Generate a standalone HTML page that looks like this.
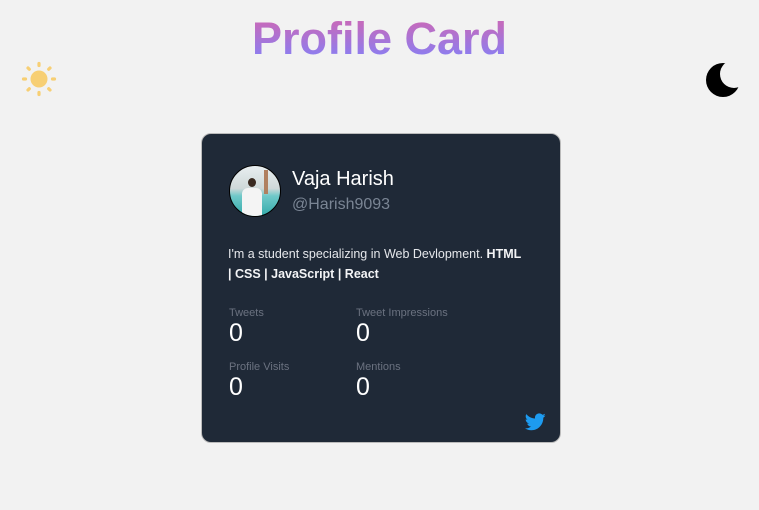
<!DOCTYPE html>
<html><head><meta charset="utf-8"><style>
*{margin:0;padding:0;box-sizing:border-box}
body{width:759px;height:510px;background:#f2f2f2;font-family:"Liberation Sans",sans-serif;position:relative;overflow:hidden}
h1{position:absolute;left:0;width:759px;top:12px;text-align:center;font-size:45px;font-weight:bold;background:linear-gradient(#c46bbd 20%,#8a7ef2 85%);-webkit-background-clip:text;background-clip:text;color:transparent;line-height:54px}
.card{position:absolute;left:201px;top:133px;width:360px;height:310px;background:#1f2937;border:1px solid #bbb;border-radius:10px;color:#fff}
.av{position:absolute;left:27px;top:31px;width:52px;height:52px;border-radius:50%;border:1px solid #000;background:linear-gradient(#e8eef0 0,#cfd8d8 45%,#6fc9c9 60%,#3aa 100%);overflow:hidden}
.name{position:absolute;left:90px;top:34px;font-size:20px}
.handle{position:absolute;left:90px;top:62px;font-size:16px;color:#7a8594}
.bio{position:absolute;left:26px;top:110px;width:330px;font-size:12.5px;line-height:20px;color:#e5e7eb}
.bio b{color:#f3f4f6}
.l{position:absolute;font-size:11px;color:#6b7280}
.v{position:absolute;font-size:25px}
</style></head><body>
<h1>Profile Card</h1>
<svg style="position:absolute;left:21px;top:61px" width="36" height="36" viewBox="0 0 36 36"><g fill="#f7cf74" stroke="#f7cf74" stroke-width="3.2" stroke-linecap="round"><circle cx="18" cy="18" r="8.5" stroke="none"/><line x1="18" y1="2.5" x2="18" y2="4.5"/><line x1="18" y1="31.5" x2="18" y2="33.5"/><line x1="2.5" y1="18" x2="4.5" y2="18"/><line x1="31.5" y1="18" x2="33.5" y2="18"/><line x1="7" y1="7" x2="8.3" y2="8.3"/><line x1="27.7" y1="27.7" x2="29" y2="29"/><line x1="7" y1="29" x2="8.3" y2="27.7"/><line x1="27.7" y1="8.3" x2="29" y2="7"/></g></svg>
<svg style="position:absolute;left:700px;top:55px" width="50" height="50" viewBox="0 0 50 50"><defs><mask id="m"><rect width="50" height="50" fill="#fff"/><circle cx="34" cy="19" r="14" fill="#000"/></mask></defs><circle cx="23" cy="25" r="17" fill="#000" mask="url(#m)"/></svg>
<div class="card">
<div class="av"><div style="position:absolute;left:18px;top:12px;width:8px;height:9px;border-radius:50%;background:#3a2a20"></div><div style="position:absolute;left:12px;top:22px;width:20px;height:30px;background:#f4f4f4;border-radius:6px 6px 0 0"></div><div style="position:absolute;left:34px;top:4px;width:4px;height:24px;background:#b08060"></div></div>
<div class="name">Vaja Harish</div>
<div class="handle">@Harish9093</div>
<div class="bio">I'm a student specializing in Web Devlopment. <b>HTML</b><br><b>| CSS | JavaScript | React</b></div>
<div class="l" style="left:27px;top:173px">Tweets</div>
<div class="v" style="left:27px;top:185px">0</div>
<div class="l" style="left:154px;top:173px">Tweet Impressions</div>
<div class="v" style="left:154px;top:185px">0</div>
<div class="l" style="left:27px;top:227px">Profile Visits</div>
<div class="v" style="left:27px;top:239px">0</div>
<div class="l" style="left:154px;top:227px">Mentions</div>
<div class="v" style="left:154px;top:239px">0</div>
<svg style="position:absolute;left:323px;top:279px" width="21" height="18" viewBox="0 0 24 20"><path fill="#1d9bf0" d="M23.6 2.4c-.9.4-1.8.6-2.8.8 1-.6 1.8-1.6 2.1-2.7-.9.6-2 1-3.1 1.2C18.9.7 17.6.1 16.2.1c-2.7 0-4.8 2.2-4.8 4.8 0 .4 0 .8.1 1.1C7.5 5.8 3.900 3.9 1.5 1 1.1 1.7.8 2.6.8 3.5c0 1.7.9 3.200 2.2 4-.8 0-1.5-.2-2.2-.6v.1c0 2.3 1.7 4.3 3.9 4.700-.4.1-.8.2-1.3.2-.3 0-.6 0-.9-.1.6 1.9 2.4 3.3 4.5 3.4-1.700 1.3-3.7 2.1-6 2.1-.4 0-.8 0-1.2-.1 2.1 1.4 4.7 2.2 7.4 2.2 8.9 0 13.7-7.4 13.7-13.7v-.6c1-.7 1.8-1.5 2.4-2.5z"/></svg>
</div>
</body></html>
